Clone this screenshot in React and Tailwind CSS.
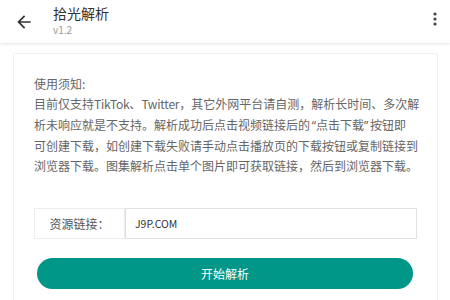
import React from "react";

export default function App() {
  const font = { fontFamily: '"Noto Sans CJK SC", "Noto Sans", sans-serif' };
  const quoteFont = { fontFamily: '"Noto Sans", sans-serif' };
  return (
    <div className="w-[450px] h-[300px] overflow-hidden bg-white" style={font}>
      <div className="relative h-[43px] flex items-start bg-white shadow-[0_1px_3px_rgba(0,0,0,0.12)]">
        <div className="w-[53px] h-[43px] flex items-center pl-[14px]">
          <svg width="20" height="20" viewBox="0 0 24 24" fill="#333">
            <path d="M20 11H7.83l5.59-5.59L12 4l-8 8 8 8 1.41-1.41L7.83 13H20v-2z" />
          </svg>
        </div>
        <div className="flex flex-col pt-[3px]">
          <div className="text-[14px] leading-[20px] text-[#333]">拾光解析</div>
          <div className="text-[10px] leading-[14px] text-[#999]">v1.2</div>
        </div>
        <div className="ml-auto w-[30px] h-[43px] flex items-center justify-center pb-[6px]">
          <svg width="4" height="14" viewBox="0 0 4 14" fill="#444">
            <circle cx="2" cy="2" r="1.6" />
            <circle cx="2" cy="7" r="1.6" />
            <circle cx="2" cy="12" r="1.6" />
          </svg>
        </div>
      </div>
      <div className="pt-[10px] pl-[13px] pr-[12px]">
        <div className="border border-[#f0f0f0] rounded-[2px] px-[20px] pt-[20px] h-[300px]">
          <div className="text-[12px] leading-[20.3px] text-[#666] whitespace-nowrap">
            <div>使用须知:</div>
            <div>
              目前仅支持<span className="tracking-[-0.25px]">TikTok</span>、<span className="tracking-[-0.25px]">Twitter</span>，其它外网平台请自测，解析长时间、多次解
            </div>
            <div>
              析未响应就是不支持。解析成功后点击视频链接后的
              <span className="inline-block w-[6px] text-right" style={quoteFont}>“</span>
              点击下载
              <span className="inline-block w-[6px] text-left" style={quoteFont}>”</span>
              按钮即
            </div>
            <div>可创建下载，如创建下载失败请手动点击播放页的下载按钮或复制链接到</div>
            <div>浏览器下载。图集解析点击单个图片即可获取链接，然后到浏览器下载。</div>
          </div>
          <div className="mt-[32px] flex h-[31px]">
            <div className="w-[91px] border border-[#eeeeee] flex items-center justify-center text-[12px] text-[#555]">
              资源链接：
            </div>
            <div className="flex-1 border border-[#e2e2e2] border-l-[#dcdcdc] flex items-center pl-[9px] text-[10.5px] text-[#333]">
              J9P.COM
            </div>
          </div>
          <div className="mt-[19px] mx-[3px] mr-[4px] h-[31px] rounded-full bg-[#009688] flex items-center justify-center text-[12px] text-white">
            开始解析
          </div>
        </div>
      </div>
    </div>
  );
}
